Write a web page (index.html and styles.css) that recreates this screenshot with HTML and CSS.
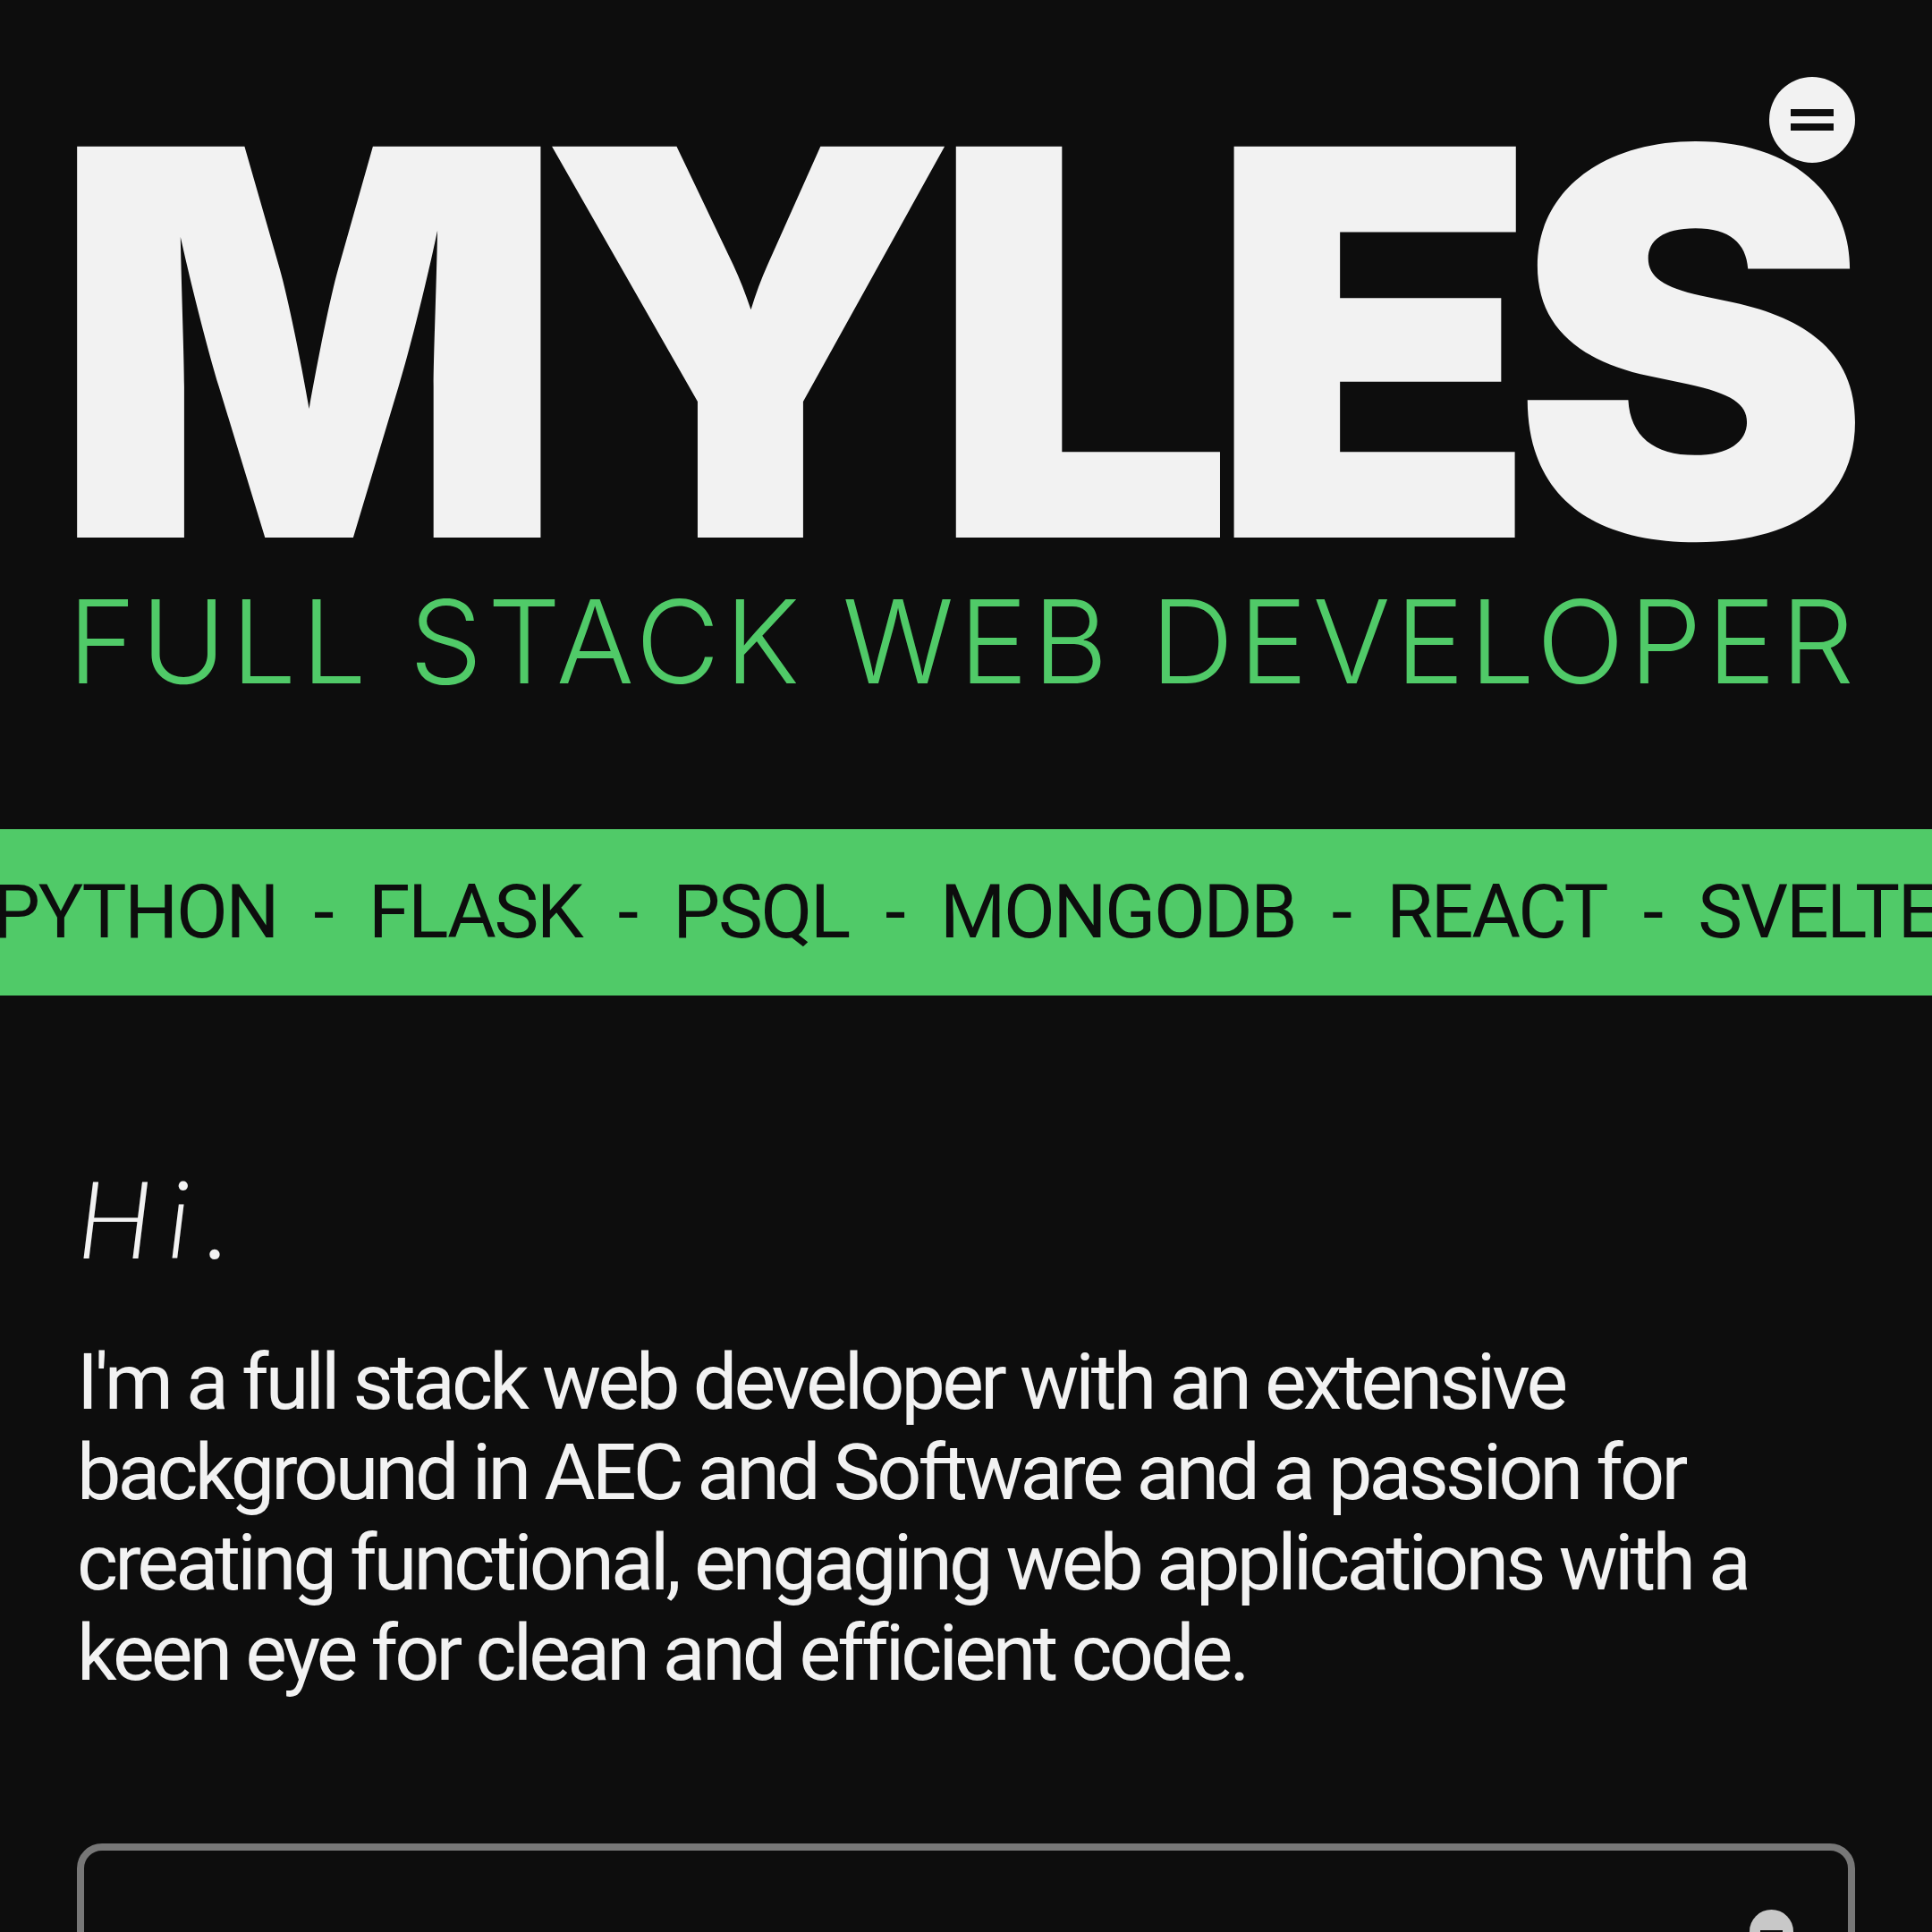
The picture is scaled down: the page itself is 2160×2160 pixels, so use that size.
FILE: index.html
```html
<!DOCTYPE html>
<html lang="en">
<head>
<meta charset="utf-8">
<title>Myles — Full Stack Web Developer</title>
<link rel="stylesheet" href="styles.css">
</head>
<body>
<button class="menu-btn" aria-label="Menu"><span class="bar"></span><span class="bar"></span></button>
<header class="hero">
  <h1 class="logo">MYLES</h1>
  <h2 class="role">FULL STACK WEB DEVELOPER</h2>
</header>
<div class="ticker">
  <div class="ticker-track">
    <span class="tech">PYTHON</span><span class="sep">-</span>
    <span class="tech">FLASK</span><span class="sep">-</span>
    <span class="tech">PSQL</span><span class="sep">-</span>
    <span class="tech">MONGODB</span><span class="sep">-</span>
    <span class="tech">REACT</span><span class="sep">-</span>
    <span class="tech">SVELTE</span><span class="sep">-</span>
    <span class="tech">JAVASCRIPT</span>
  </div>
</div>
<main class="about">
  <h3 class="hi">Hi.</h3>
  <p class="intro">I'm a full stack web developer with an extensive background in AEC and Software and a passion for creating functional, engaging web applications with a keen eye for clean and efficient code.</p>
  <section class="card">
    <button class="card-btn" aria-label="Collapse"><span class="card-bar"></span></button>
  </section>
</main>
</body>
</html>
```
FILE: styles.css
```css
html, body {
  margin: 0;
  padding: 0;
  background: #0d0d0d;
  color: #f2f2f2;
  overflow: hidden;
}
body {
  font-family: Roboto, "Liberation Sans", sans-serif;
}
.menu-btn {
  position: fixed;
  top: 86px;
  right: 86px;
  width: 96px;
  height: 96px;
  border-radius: 50%;
  border: none;
  padding: 0;
  background: #f2f2f2;
  display: flex;
  flex-direction: column;
  align-items: center;
  justify-content: center;
  gap: 8px;
  z-index: 5;
}
.menu-btn .bar {
  display: block;
  width: 48px;
  height: 8px;
  background: #0d0d0d;
}
.hero {
  padding: 112px 86px 0 86px;
}
.logo {
  margin: 0 0 0 -28px;
  font-family: Inter, "Noto Sans", sans-serif;
  font-weight: 900;
  font-size: 601px;
  line-height: 541px;
  letter-spacing: -29px;
  color: #f2f2f2;
  white-space: nowrap;
}
.role {
  margin: 0 0 0 -10px;
  font-family: Inter, "Noto Sans", sans-serif;
  font-weight: 300;
  font-size: 129px;
  line-height: 129px;
  letter-spacing: 5.8px;
  color: #50ca68;
  white-space: nowrap;
}
.ticker {
  margin-top: 145px;
  height: 186px;
  background: #50ca68;
  overflow: hidden;
}
.ticker-track {
  display: flex;
  margin-left: -8px;
  white-space: nowrap;
  font-family: Roboto, "Liberation Sans", sans-serif;
  font-size: 84px;
  line-height: 186px;
  letter-spacing: -2.3px;
  color: #0d0d0d;
}
.sep {
  margin: 0 40.5px;
}
.about {
  padding: 0 86px;
}
.hi {
  margin: 175px 0 0 0;
  font-family: Lato, sans-serif;
  font-style: italic;
  font-weight: 300;
  font-size: 121px;
  line-height: 145px;
  letter-spacing: 17px;
  color: #f2f2f2;
}
.intro {
  margin: 61px 0 0 0;
  font-family: Roboto, "Liberation Sans", sans-serif;
  font-size: 88px;
  line-height: 101px;
  letter-spacing: -3.85px;
  color: #f2f2f2;
}
.card {
  position: relative;
  margin-top: 163px;
  height: 500px;
  border: 8px solid #777777;
  border-radius: 28px;
}
.card-btn {
  position: absolute;
  top: 66px;
  right: 61px;
  width: 49px;
  height: 49px;
  border-radius: 50%;
  border: none;
  padding: 0;
  background: #c8c8c8;
  display: flex;
  align-items: center;
  justify-content: center;
}
.card-bar {
  display: block;
  width: 25px;
  height: 4px;
  background: #0d0d0d;
}
```
